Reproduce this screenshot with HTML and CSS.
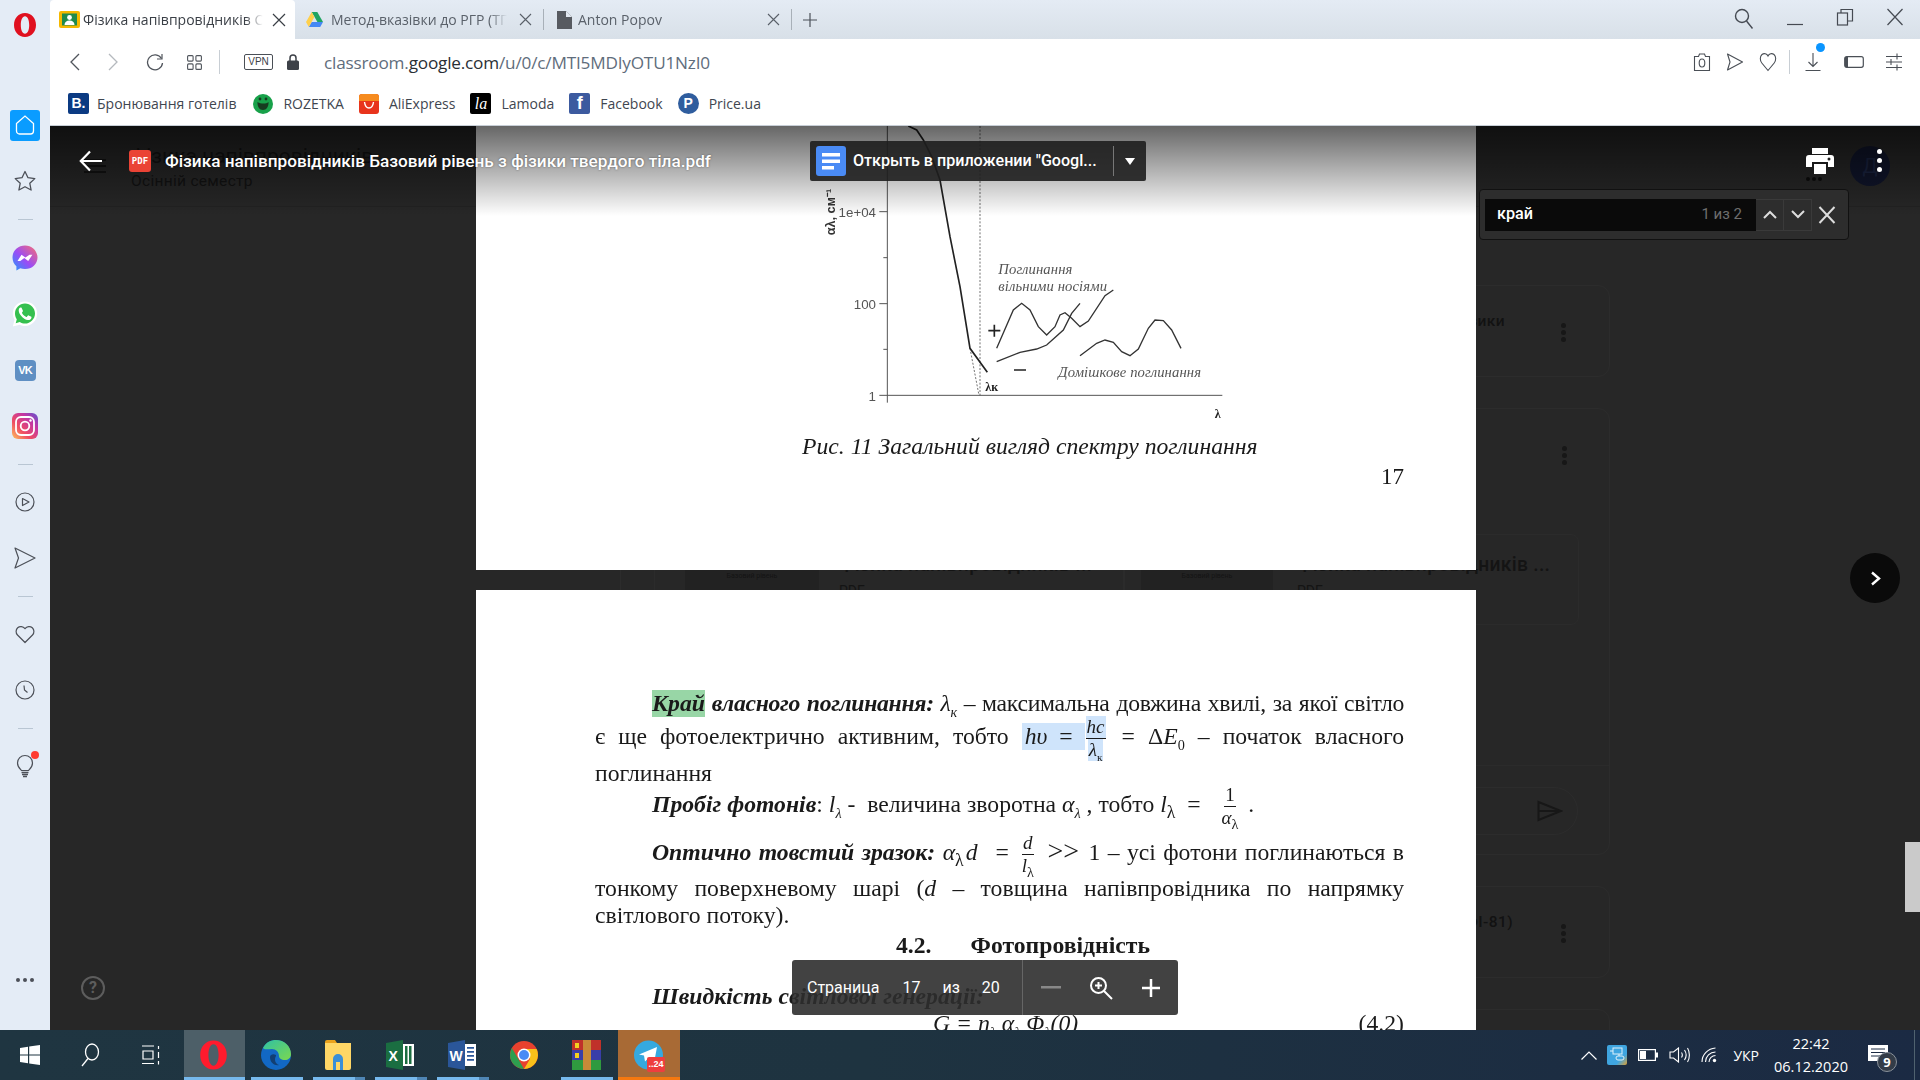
FILE: index.html
```html
<!DOCTYPE html>
<html lang="uk">
<head>
<meta charset="utf-8">
<title>Фізика напівпровідників</title>
<link rel="stylesheet" href="styles.css">
</head>
<body>
<div class="window">
  <aside class="sidebar">
    <div class="logo-item"><svg width="24" height="24" viewBox="0 0 24 24"><path fill="#e0101f" fill-rule="evenodd" d="M12 0C5.500 0 1 5.200 1 12s4.500 12 11 12 11-5.200 11-12S18.500 0 12 0zm0 3.200c2.600 0 4.200 3.900 4.200 8.800s-1.600 8.800-4.200 8.800S7.800 16.900 7.800 12 9.400 3.200 12 3.200z"/></svg></div>
    <div class="side-item"><span class="home-btn"><svg width="22" height="22" viewBox="0 0 22 22" fill="none" stroke="#fff" stroke-width="1.300"><path d="M2.500 9.500 11 2l8.500 7.500V17a3 3 0 0 1-3 3h-11a3 3 0 0 1-3-3z"/></svg></span></div>
    <div class="side-item"><svg width="22" height="22" viewBox="0 0 22 22" fill="none" stroke="#4c5058" stroke-width="1.300" stroke-linejoin="round"><path d="M11 1.500l3 6.200 6.800.9-5 4.700 1.300 6.700-6.100-3.300-6.100 3.300 1.300-6.700-5-4.700 6.800-.9z"/></svg></div>
    <div class="side-sep"></div>
    <div class="side-item side-tall"><svg width="26" height="26" viewBox="0 0 26 26"><defs><linearGradient id="msg" x1="0" y1="1" x2="1" y2="0"><stop offset="0" stop-color="#1e9bfb"/><stop offset=".45" stop-color="#9a4cf6"/><stop offset="1" stop-color="#fb6f6f"/></linearGradient></defs><path fill="url(#msg)" d="M13 .500C6 .500.500 5.600.500 12.500c0 3.600 1.500 6.700 3.900 8.800v4.200l3.900-2.200c1.400.5 3 .8 4.700.8 7 0 12.500-5.100 12.500-11.600S20 .500 13 .500z"/><path fill="#fff" d="M5.500 16l4-6.300 3.900 2.900 4.100-2.900 2.900 0-4.200 6.300-3.900-2.900-4 2.900z"/></svg></div>
    <div class="side-item"><svg width="26" height="26" viewBox="0 0 26 26"><path fill="#fff" d="M13 .500C6 .500.800 5.900.800 12.500c0 2.300.600 4.400 1.800 6.300L.800 25.500l6.900-1.800c1.600.9 3.400 1.300 5.300 1.300 6.900 0 12.200-5.600 12.200-12.500S19.900.500 13 .500z"/><path fill="#35c04f" d="M13 2.500c-5.600 0-10 4.500-10 10 0 2.100.6 4 1.800 5.700l-1.100 4 4.100-1.100c1.600 1 3.300 1.500 5.200 1.500 5.500 0 10-4.600 10-10.100s-4.500-10-10-10z"/><path fill="#fff" d="M9.800 7.300c-.4-.8-.7-.8-1.100-.8-1 .1-2 1.100-2 2.900 0 2.200 1.600 4.300 1.800 4.600 2.500 3.600 5.200 4.700 7.400 5.100 1.600.2 3.300-.9 3.500-2.100.1-.6.100-1 0-1.200l-2.800-1.400c-.3-.1-.5-.1-.7.2l-1 1.200c-.2.200-.4.200-.7.100-1.400-.6-3.100-1.800-4.200-3.900-.1-.3 0-.4.100-.6l.8-1.100c.1-.2.100-.4 0-.6z"/></svg></div>
    <div class="side-item"><span class="vk">VK</span></div>
    <div class="side-item"><svg width="26" height="26" viewBox="0 0 26 26"><defs><linearGradient id="ig" x1="0" y1="1" x2="1" y2="0"><stop offset="0" stop-color="#fdc25c"/><stop offset=".35" stop-color="#ef4d62"/><stop offset=".7" stop-color="#c236a4"/><stop offset="1" stop-color="#5a55d0"/></linearGradient></defs><rect width="26" height="26" rx="6" fill="url(#ig)"/><rect x="4" y="4" width="18" height="18" rx="5" fill="none" stroke="#fff" stroke-width="1.800"/><circle cx="13" cy="13" r="4.300" fill="none" stroke="#fff" stroke-width="1.800"/><circle cx="18.500" cy="7.500" r="1.200" fill="#fff"/></svg></div>
    <div class="side-sep"></div>
    <div class="side-item"><svg width="20" height="20" viewBox="0 0 20 20" fill="none" stroke="#4c5058" stroke-width="1.200"><circle cx="10" cy="10" r="9"/><path d="M7.500 6.500 14 10l-6.500 3.500z" stroke-linejoin="round"/></svg></div>
    <div class="side-item"><svg width="22" height="22" viewBox="0 0 22 22" fill="none" stroke="#4c5058" stroke-width="1.200" stroke-linejoin="round"><path d="M1 1l20 10-20 10 3.500-10z"/></svg></div>
    <div class="side-sep"></div>
    <div class="side-item"><svg width="20" height="20" viewBox="0 0 20 20" fill="none" stroke="#4c5058" stroke-width="1.200"><path d="M10 18.500 2.500 11C.5 9 .7 5.500 2.700 3.700c2.100-1.800 5.300-1.500 7.300 1 2-2.500 5.200-2.800 7.300-1 2 1.800 2.200 5.300.2 7.300z" stroke-linejoin="round"/></svg></div>
    <div class="side-item"><svg width="20" height="20" viewBox="0 0 20 20" fill="none" stroke="#4c5058" stroke-width="1.200"><circle cx="10" cy="10" r="9"/><path d="M9 5.500 9.500 10l3 2.500"/></svg></div>
    <div class="side-sep"></div>
    <div class="side-item bulb"><svg width="18" height="24" viewBox="0 0 18 24" fill="none" stroke="#4c5058" stroke-width="1.200"><path d="M5.500 16.500C3.500 14.500 1.500 13 1.500 9a7.500 7.500 0 0 1 15 0c0 4-2 5.500-4 7.500z"/><path d="M5.500 18.500h7M6 20.500h6M7 22.500h4" stroke-width="1.400"/></svg><i class="bulb-dot"></i></div>
    <div class="side-item side-more"><i></i><i></i><i></i></div>
  </aside>

  <div class="browser">
    <div class="tabstrip">
      <div class="tab tab-active">
        <svg class="fav" width="21" height="17" viewBox="0 0 21 17"><rect width="21" height="17" rx="2" fill="#f5b800"/><rect x="3" y="2.500" width="15" height="12" fill="#1f8a4c"/><circle cx="10.500" cy="6.500" r="2.400" fill="#fff"/><path d="M5.500 14c0-3 2-4.500 5-4.500s5 1.500 5 4.500z" fill="#fff"/></svg>
        <span class="tab-title tab-title-active">Фізика напівпровідників С</span>
        <svg class="tab-x" width="14" height="14" viewBox="0 0 14 14" stroke="#3a3f46" stroke-width="1.200"><path d="M1 1l12 12M13 1 1 13"/></svg>
      </div>
      <div class="tab tab-sep">
        <svg class="fav" width="17" height="16" viewBox="0 0 17 16"><path fill="#1fa463" d="M5.700 0h5.600l5.700 10h-5.600z"/><path fill="#4688f4" d="M5.600 10H17l-2.800 5H2.800z"/><path fill="#ffd04b" d="M5.700 0 0 10l2.800 5 2.800-5 2.800-5z"/></svg>
        <span class="tab-title">Метод-вказівки до РГР (ТГ</span>
        <svg class="tab-x" width="13" height="13" viewBox="0 0 13 13" stroke="#596069" stroke-width="1.100"><path d="M1 1l11 11M12 1 1 12"/></svg>
      </div>
      <div class="tab tab-sep tab-last">
        <svg class="fav" width="15" height="18" viewBox="0 0 15 18"><path fill="#575a60" d="M0 0h9l6 6v12H0z"/><path fill="#e2e8f0" d="M9 0v6h6z"/></svg>
        <span class="tab-title">Anton Popov</span>
        <svg class="tab-x" width="13" height="13" viewBox="0 0 13 13" stroke="#596069" stroke-width="1.100"><path d="M1 1l11 11M12 1 1 12"/></svg>
      </div>
      <svg class="tab-plus" width="14" height="14" viewBox="0 0 14 14" stroke="#4b5159" stroke-width="1.200"><path d="M7 0v14M0 7h14"/></svg>
      <div class="win-controls">
        <svg width="20" height="22" viewBox="0 0 20 22" fill="none" stroke="#454a52" stroke-width="1.400"><circle cx="8" cy="8" r="6.500"/><path d="M12.500 13l6 7.500"/></svg>
        <svg width="18" height="18" viewBox="0 0 18 18" stroke="#454a52" stroke-width="1.200"><path d="M1 16.500h16"/></svg>
        <svg width="18" height="18" viewBox="0 0 18 18" fill="none" stroke="#454a52" stroke-width="1.200"><rect x="1.500" y="5" width="10" height="12"/><path d="M5 5V1.500h11.500V13H11.500"/></svg>
        <svg width="18" height="18" viewBox="0 0 18 18" stroke="#454a52" stroke-width="1.200"><path d="M1.500 1l15 16M16.500 1l-15 16"/></svg>
      </div>
    </div>

    <div class="toolbar">
      <div class="address-row">
        <svg class="nav-icon" width="12" height="18" viewBox="0 0 12 18" fill="none" stroke="#50555c" stroke-width="1.300"><path d="M10 1 2 9l8 8"/></svg>
        <svg class="nav-icon nav-fwd" width="12" height="18" viewBox="0 0 12 18" fill="none" stroke="#b5b9be" stroke-width="1.300"><path d="M2 1l8 8-8 8"/></svg>
        <svg class="nav-icon nav-reload" width="18" height="18" viewBox="0 0 18 18" fill="none" stroke="#50555c" stroke-width="1.300"><path d="M15.500 5.500A7.500 7.500 0 1 0 16.500 10"/><path d="M16 1v5h-5" stroke-width="1.200"/></svg>
        <svg class="nav-icon nav-grid" width="15" height="15" viewBox="0 0 15 15" fill="none" stroke="#50555c" stroke-width="1.100"><rect x=".600" y=".600" width="5.500" height="5.500" rx="1"/><rect x="8.900" y=".600" width="5.500" height="5.500" rx="1"/><rect x=".600" y="8.900" width="5.500" height="5.500" rx="1"/><rect x="8.900" y="8.900" width="5.500" height="5.500" rx="1"/></svg>
        <i class="v-sep nav-sep"></i>
        <span class="vpn">VPN</span>
        <svg class="lock" width="12" height="16" viewBox="0 0 12 16"><path fill="none" stroke="#3d4148" stroke-width="1.500" d="M3 7V4a3 3 0 0 1 6 0v3"/><rect y="6.500" width="12" height="9.500" rx="1.500" fill="#3d4148"/></svg>
        <div class="url"><span class="url-dim">classroom.</span><span class="url-main">google.com</span><span class="url-dim">/u/0/c/MTI5MDIyOTU1NzI0</span></div>
        <div class="addr-tools">
          <svg width="18" height="20" viewBox="0 0 18 20" fill="none" stroke="#4a4f56" stroke-width="1.100"><path d="M1.500 4.500h4l1-2.500h5l1 2.500h4v14h-15z"/><ellipse cx="9" cy="11" rx="2.800" ry="4"/></svg>
          <svg width="18" height="20" viewBox="0 0 18 20" fill="none" stroke="#4a4f56" stroke-width="1.100"><path d="M1.500 2 16.500 10 1.500 18 4 10z" stroke-linejoin="round"/></svg>
          <svg width="18" height="20" viewBox="0 0 18 20" fill="none" stroke="#4a4f56" stroke-width="1.100"><path d="M9 18.500 2.800 11C.8 8.500.8 4.500 3 2.500c2-1.500 4.800-1 6 1.500 1.200-2.500 4-3 6-1.500 2.200 2 2.200 6 .2 8.500z"/></svg>
          <i class="v-sep"></i>
          <span class="dl"><svg width="16" height="20" viewBox="0 0 16 20" fill="none" stroke="#4a4f56" stroke-width="1.100"><path d="M8 1v13M3.500 10 8 14.500 12.500 10M.5 18.500h15"/></svg><i class="dl-dot"></i></span>
          <svg class="batt" width="20" height="12" viewBox="0 0 20 12"><rect x=".7" y=".7" width="18.600" height="10.600" rx="2" fill="none" stroke="#4a4f56" stroke-width="1.200"/><rect x="1" y="1" width="3" height="10" fill="#4a4f56"/></svg>
          <svg width="18" height="20" viewBox="0 0 18 20" stroke="#4a4f56" stroke-width="1.100"><path d="M1 4.500h16M1 10h16M1 15.500h16M12 1.500v6M6 7v6M12 12.500v6"/></svg>
        </div>
      </div>
      <div class="bookmarks">
        <span class="bm bm-first"><span class="bm-ico bm-b">B.</span>Бронювання готелів</span>
        <span class="bm"><svg class="bm-svg" width="20" height="20" viewBox="0 0 20 20"><circle cx="10" cy="10" r="10" fill="#18a14a"/><path d="M4.500 8C8 10 13 10 15.500 8c.3 4.500-2 8-5.500 8s-5.800-3.500-5.500-8z" fill="#173b20"/><circle cx="7" cy="5" r="1.400" fill="#173b20"/><circle cx="13" cy="5" r="1.400" fill="#173b20"/></svg>ROZETKA</span>
        <span class="bm"><svg class="bm-svg" width="20" height="20" viewBox="0 0 20 20"><rect width="20" height="20" rx="3" fill="#e8341c"/><path d="M0 3a3 3 0 0 1 3-3h14a3 3 0 0 1 3 3v4H0z" fill="#f68b1e"/><path d="M5.500 8c.5 4 2.500 6 4.500 6s4-2 4.500-6" fill="none" stroke="#fff" stroke-width="1.400"/></svg>AliExpress</span>
        <span class="bm"><span class="bm-ico bm-la">la</span>Lamoda</span>
        <span class="bm"><span class="bm-ico bm-f">f</span>Facebook</span>
        <span class="bm"><span class="bm-ico bm-p">P</span>Price.ua</span>
      </div>
    </div>

    <main class="content">
      <!-- dimmed classroom stream behind the viewer -->
      <div class="stream">
        <header class="stream-head">
          <svg class="burger" width="22" height="14" viewBox="0 0 22 14" fill="#121212"><rect width="22" height="2"/><rect y="6" width="22" height="2"/><rect y="12" width="22" height="2"/></svg>
          <div class="course"><div class="course-name">Фізика напівпровідників</div><div class="course-term">Осінній семестр</div></div>
          <div class="head-tools">
            <span class="apps-dots"><i></i><i></i><i></i></span>
            <span class="avatar">Д</span>
          </div>
        </header>
        <div class="feed">
          <section class="card card-short"><span class="card-title">Лекції з фізики</span><span class="kebab"><i></i><i></i><i></i></span></section>
          <section class="card card-post">
            <div class="post-top"><span class="kebab"><i></i><i></i><i></i></span></div>
            <div class="attachments">
              <div class="attach attach-a"><div class="thumb">Фізика твердого тіла<br>Базовий рівень</div><div class="attach-text"><div class="attach-name">Фізика напівпровідників ...</div><div class="attach-type">PDF</div></div></div>
              <div class="attach"><div class="thumb">Фізика твердого тіла<br>Базовий рівень</div><div class="attach-text"><div class="attach-name">Фізика напівпровідників ...</div><div class="attach-type">PDF</div></div></div>
            </div>
            <div class="post-bottom"><div class="comment"><svg width="26" height="22" viewBox="0 0 26 22" fill="none" stroke="#171717" stroke-width="2"><path d="M1.500 2 24 11 1.500 20zM1.500 11H24"/></svg></div></div>
          </section>
          <section class="card card-short"><span class="card-title card-title-b">Практичні заняття (ФІ-81)</span><span class="kebab"><i></i><i></i><i></i></span></section>
          <section class="card card-short"></section>
        </div>
      </div>

      <!-- PDF viewer overlay -->
      <div class="viewer">
        <div class="pages">
          <article class="page page-one">
            <svg class="chart" width="480" height="300" viewBox="0 18 1440 900">
              <g fill="none" stroke="#555" stroke-width="3">
                <path d="M322 18V848M298 826H1327M298 275h24M298 551h24M310 413h12M310 688h12"/>
              </g>
              <path d="M600 18V826" stroke="#555" stroke-width="2.500" stroke-dasharray="6 5" fill="none"/>
              <path d="M570 685 597 826" stroke="#555" stroke-width="2.500" stroke-dasharray="6 5" fill="none"/>
              <path d="M385 18 410 30 430 60 455 110 480 180 510 350 540 500 570 685 622 757" fill="none" stroke="#222" stroke-width="5"/>
              <g fill="none" stroke="#333" stroke-width="4">
                <path d="M650 685 700 570 725 550 750 570 775 620 800 645 825 620 840 585 855 578 875 595 900 620 925 603 975 527 1000 510"/>
                <path d="M650 725 720 697 770 687 800 675 850 630 875 580 900 550"/>
                <path d="M900 707 950 670 975 660 1000 667 1025 695 1050 707 1075 687 1105 625 1125 600 1150 602 1175 630 1203 685"/>
                <path d="M625 632h36M643 614v36M702 750h36" stroke="#222" stroke-width="5"/>
              </g>
              <g class="chart-num" text-anchor="end">
                <text x="288" y="291">1e+04</text>
                <text x="288" y="567">100</text>
                <text x="288" y="842">1</text>
              </g>
              <text class="chart-axis" transform="translate(165 346) rotate(-90)">αλ, см⁻¹</text>
              <g class="chart-note">
                <text x="655" y="462" textLength="222">Поглинання</text>
                <text x="655" y="514" textLength="326">вільними носіями</text>
                <text x="835" y="770" textLength="428">Домішкове поглинання</text>
              </g>
              <text class="chart-lam" x="616" y="812">λк</text>
              <text class="chart-lam" x="1304" y="893">λ</text>
            </svg>
            <p class="caption">Рис. 11 Загальний вигляд спектру поглинання</p>
            <p class="page-num">17</p>
          </article>

          <article class="page page-two">
            <div class="line line-a first-indent just"><mark class="hit"><b><i>Край</i></b></mark> <b><i>власного поглинання:</i></b> <i>λ<sub>к</sub></i> – максимальна довжина хвилі, за якої світло</div>
            <div class="line line-b just">є ще фотоелектрично активним, тобто <mark class="sel"><i>hυ</i> &nbsp;=&nbsp;</mark><span class="frac frac-sel"><span class="sel-n"><i>hc</i></span><span class="sel-d"><i>λ</i><sub>к</sub></span></span> = Δ<i>E</i><sub>0</sub> – початок власного</div>
            <div class="line line-c">поглинання</div>
            <div class="line line-d first-indent"><b><i>Пробіг фотонів</i></b>: <i>l<sub>λ</sub></i> -&nbsp; величина зворотна <i>α<sub>λ</sub></i> , тобто <i>l</i><sub class="big">λ</sub> &nbsp;=&nbsp; <span class="frac frac-wide"><span>1</span><span><i>α</i><sub class="big">λ</sub></span></span> .</div>
            <div class="line line-e first-indent just"><b><i>Оптично товстий зразок:</i></b> <i>α</i><sub class="big">λ</sub><i class="math-d">d</i> &nbsp;=<span class="frac frac-e"><span><i>d</i></span><span><i>l</i><sub class="big">λ</sub></span></span> <span class="gg">&gt;&gt;</span> 1 – усі фотони поглинаються в</div>
            <div class="line line-f just">тонкому поверхневому шарі (<i>d</i> – товщина напівпровідника по напрямку</div>
            <div class="line line-g">світлового потоку).</div>
            <h2 class="section-title"><span>4.2.</span><span>Фотопровідність</span></h2>
            <div class="line line-h first-indent"><b><i>Швидкість світлової генерації:</i></b></div>
            <div class="formula"><i class="formula-body">G = η<sub>λ</sub> α<sub>λ</sub> Φ<sub>λ</sub>(0)</i><span>(4.2)</span></div>
          </article>
        </div>

        <div class="viewer-fade"></div>

        <div class="viewer-head">
          <svg class="back" width="24" height="22" viewBox="0 0 24 22" fill="none" stroke="#fff" stroke-width="2.200"><path d="M23 11H2M11 1.500 1.800 11l9.200 9.500"/></svg>
          <span class="pdf-badge">PDF</span>
          <span class="doc-title">Фізика напівпровідників Базовий рівень з фізики твердого тіла.pdf</span>
          <svg class="print" width="28" height="26" viewBox="0 0 28 26" fill="#fff"><path d="M6 0h16v6H6zM3 7h22a3 3 0 0 1 3 3v9h-6v-5H6v5H0v-9a3 3 0 0 1 3-3z"/><path d="M8 16h12v10H8z"/><circle cx="23" cy="11" r="1.500" fill="#222"/></svg>
          <span class="v-dots"><i></i><i></i><i></i></span>
        </div>

        <div class="open-with">
          <svg width="30" height="30" viewBox="0 0 30 30"><rect width="30" height="30" rx="3" fill="#4a8bf5"/><path fill="#fff" d="M6 7h18v3.500H6zM6 13.500h18V17H6zM6 20h12v3.500H6z"/></svg>
          <span class="open-text">Открыть в приложении "Googl...</span>
          <i class="open-sep"></i>
          <i class="open-caret"></i>
        </div>

        <div class="find">
          <div class="find-input"><span class="find-q">край</span><span class="find-count">1 из 2</span></div>
          <span class="find-btn"><svg width="14" height="9" viewBox="0 0 14 9" fill="none" stroke="#ddd" stroke-width="2"><path d="M1 8l6-6 6 6"/></svg></span>
          <span class="find-btn"><svg width="14" height="9" viewBox="0 0 14 9" fill="none" stroke="#ddd" stroke-width="2"><path d="M1 1l6 6 6-6"/></svg></span>
          <svg class="find-x" width="18" height="18" viewBox="0 0 18 18" stroke="#ddd" stroke-width="2"><path d="M1.500 1 16.500 17M16.500 1 1.500 17"/></svg>
        </div>

        <div class="next"><svg width="11" height="15" viewBox="0 0 11 15" fill="none" stroke="#fff" stroke-width="2.400"><path d="M2 1.500 9 7.500l-7 6"/></svg></div>
        <div class="thumb-scroll"></div>
        <div class="help">?</div>

        <div class="pager">
          <div class="pager-info"><span>Страница</span><span class="pg-17">17</span><span class="pg-iz">из</span><span class="pg-20">20</span></div>
          <div class="pager-zoom">
            <svg width="20" height="3" viewBox="0 0 20 3" fill="#888"><rect width="20" height="2.500"/></svg>
            <svg width="24" height="24" viewBox="0 0 24 24" fill="none" stroke="#fff" stroke-width="2"><circle cx="9.500" cy="9.500" r="7.500"/><path d="M15 15l8 8M9.500 6v7M6 9.500h7" /></svg>
            <svg width="20" height="20" viewBox="0 0 20 20" stroke="#fff" stroke-width="2.500"><path d="M10 1v18M1 10h18"/></svg>
          </div>
        </div>
      </div>
    </main>
  </div>
</div>

<footer class="taskbar">
  <div class="tb-sys"><svg width="20" height="20" viewBox="0 0 20 20" fill="#fff"><path d="M0 3l8-1.200V9.500H0zM9.200 1.600 20 0v9.500H9.200zM0 10.500h8v7.700L0 17zM9.200 10.500H20V20L9.200 18.400z"/></svg></div>
  <div class="tb-sys"><svg width="20" height="24" viewBox="0 0 20 24" fill="none" stroke="#fff" stroke-width="1.300"><ellipse cx="12" cy="9" rx="6.500" ry="8"/><path d="M8 15.500 2 23"/></svg></div>
  <div class="tb-sys tb-view"><svg width="20" height="20" viewBox="0 0 20 20" fill="none" stroke="#fff" stroke-width="1.200"><path d="M1 1h12M1 18.500h12M2 6h10v8H2zM17.500 1v3M17.500 7v6M17.500 16v3.500"/></svg></div>
  <div class="tb-app tb-active"><svg width="29" height="30" viewBox="0 0 24 24"><path fill="#ff1b2d" fill-rule="evenodd" d="M12 0C5.500 0 1 5.200 1 12s4.500 12 11 12 11-5.200 11-12S18.500 0 12 0zm0 3.200c2.600 0 4.200 3.900 4.200 8.800s-1.600 8.800-4.200 8.800S7.800 16.900 7.800 12 9.400 3.200 12 3.200z"/></svg></div>
  <div class="tb-app tb-on"><svg width="30" height="30" viewBox="0 0 30 30"><defs><linearGradient id="edge" x1="0" y1="0" x2="1" y2="1"><stop offset="0" stop-color="#2fc1a4"/><stop offset="1" stop-color="#7bd84f"/></linearGradient></defs><circle cx="15" cy="15" r="15" fill="#1268c4"/><path fill="url(#edge)" d="M2 8C5 2 10 0 15 0c8 0 15 6 15 14 0 4-3 6-6 6-4 0-6-2-6-4 0-4-3-7-7-7-4 0-8 1-9-1z"/><path fill="#123f73" d="M9 17c0 6 5 9 9 8-4-1-5-6-3-9 1-2-6-3-6 1z"/></svg></div>
  <div class="tb-app tb-on tb-split"><svg width="26" height="30" viewBox="0 0 26 30"><path fill="#eaa21c" d="M0 2a2 2 0 0 1 2-2h8l2 3h-12z"/><path fill="#ffd766" d="M0 3h26v25a2 2 0 0 1-2 2H2a2 2 0 0 1-2-2z"/><path fill="#3a8fd8" d="M8 19a5 5 0 0 1 10 0v11h-3v-8h-4v8H8z"/></svg></div>
  <div class="tb-app tb-on tb-split"><svg width="28" height="30" viewBox="0 0 28 30"><path fill="#1a6e41" d="M0 3 17 0v30L0 27z"/><path fill="#fff" d="M17 4h11v22H17z"/><path fill="#1a6e41" d="M19 6h2.500v18H19zM23 6h2.500v18H23z"/><text class="tb-letter" x="2.500" y="21">X</text></svg></div>
  <div class="tb-app tb-on tb-split"><svg width="28" height="30" viewBox="0 0 28 30"><path fill="#2a5699" d="M0 3 17 0v30L0 27z"/><path fill="#fff" d="M17 4h11v22H17z"/><path fill="#2a5699" d="M19 7h7v1.800h-7zM19 11h7v1.800h-7zM19 15h7v1.800h-7zM19 19h7v1.800h-7z"/><text class="tb-letter" x="1.500" y="21">W</text></svg></div>
  <div class="tb-app"><svg width="28" height="28" viewBox="0 0 28 28"><circle cx="14" cy="14" r="14" fill="#e8412e"/><path fill="#f9c11a" d="M14 8h12.600A14 14 0 0 1 14 28l6-10z"/><path fill="#2e9e4f" d="M1.900 7 8 17.500 14 28A14 14 0 0 1 1.900 7z"/><circle cx="14" cy="14" r="6.500" fill="#fff"/><circle cx="14" cy="14" r="5" fill="#4a8bf5"/></svg></div>
  <div class="tb-app tb-on"><svg width="29" height="30" viewBox="0 0 29 30"><rect width="29" height="10" fill="#c0312a"/><rect y="10" width="29" height="10" fill="#3a3ea8"/><rect y="20" width="29" height="10" fill="#2f9a3f"/><rect x="11" width="8" height="30" fill="#c98a38"/><rect x="3" y="3" width="4" height="5" fill="#f5d020"/><rect x="3" y="13" width="4" height="5" fill="#f5d020"/></svg></div>
  <div class="tb-app tb-tg"><svg width="29" height="30" viewBox="0 0 29 30"><circle cx="14.500" cy="15" r="14.500" fill="#35a9e0"/><path fill="#fff" d="M5 14.500 23 7l-3 16-6-4.500-3 3-1-6z"/></svg><span class="tg-badge">..24</span></div>
  <div class="tray">
    <svg width="16" height="9" viewBox="0 0 16 9" fill="none" stroke="#fff" stroke-width="1.200"><path d="M.5 8.500 8 1l7.500 7.500"/></svg>
    <span class="intel"><svg width="20" height="20" viewBox="0 0 20 20" fill="none" stroke="#dff1fb" stroke-width="1"><rect x="6" y="3" width="9" height="6"/><rect x="9" y="11" width="8" height="4" rx="2"/><path d="M3 6h3M12 9v2"/></svg></span>
    <svg width="20" height="12" viewBox="0 0 20 12"><rect x=".6" y=".6" width="16.800" height="10.800" fill="none" stroke="#fff" stroke-width="1.200"/><rect x="2" y="2" width="6" height="8" fill="#fff"/><rect x="18" y="3.500" width="2" height="5" fill="#fff"/></svg>
    <svg width="21" height="16" viewBox="0 0 21 16" fill="none" stroke="#fff" stroke-width="1.100"><path d="M1 5h3.500L9.500 1v14L4.500 11H1zM12.500 5.500c1 1.500 1 3.500 0 5M15.500 3c2 3 2 7 0 10M18.500 1c2.500 4 2.500 10 0 14"/></svg>
    <svg width="18" height="16" viewBox="0 0 18 16" fill="none" stroke="#fff" stroke-width="1.100"><path d="M1 15C1 7.500 7 1.500 14.500 1M4.500 15c0-5.500 4.500-10 10-10M8 15c0-3.500 3-6.500 6.500-6.500"/><circle cx="13.500" cy="13.500" r="1.700" fill="#fff" stroke="none"/></svg>
    <span class="tray-lang">УКР</span>
    <div class="clock"><span>22:42</span><span>06.12.2020</span></div>
    <div class="notif"><svg width="20" height="17" viewBox="0 0 20 17"><path fill="#fff" d="M0 0h20v16H0z"/><path stroke="#1b2a43" d="M3 4h14M3 7.500h14M3 11h14"/></svg><span class="notif-badge">9</span></div>
    <i class="tray-edge"></i>
  </div>
</footer>
</body>
</html>
```

FILE: styles.css
```css
* { box-sizing: border-box; }
html, body { margin: 0; padding: 0; width: 1920px; height: 1080px; overflow: hidden; }
body { font-family: "Open Sans", "Noto Sans", sans-serif; display: flex; flex-direction: column; background: #1d3042; }

.window { display: flex; height: 1030px; }

/* ---- Opera sidebar ---- */
.sidebar { width: 50px; flex: none; display: flex; flex-direction: column; align-items: center; background: #e4ecf6; }
.logo-item { height: 97px; padding-top: 13px; display: flex; justify-content: center; align-items: flex-start; }
.side-item { height: 56px; width: 50px; display: flex; align-items: center; justify-content: center; position: relative; }
.side-tall { height: 57px; }
.side-sep { height: 20px; width: 15px; display: flex; align-items: center; }
.side-sep::before { content: ""; display: block; width: 15px; height: 1px; background: #b9c6d3; }
.home-btn { width: 30px; height: 31px; background: #0a9cff; border-radius: 3px; display: flex; align-items: center; justify-content: center; }
.vk { width: 21px; height: 21px; border-radius: 4px; background: #5f8fc3; color: #fff; font: 700 11px/21px "Liberation Sans", sans-serif; text-align: center; letter-spacing: -1px; }
.bulb-dot { position: absolute; left: 31px; top: 13px; width: 8px; height: 8px; border-radius: 50%; background: #ff3b30; }
.side-more { margin-top: auto; margin-bottom: 22px; gap: 3px; }
.side-more i { width: 4px; height: 4px; border-radius: 50%; background: #4c5058; }

/* ---- browser chrome ---- */
.browser { flex: 1; display: flex; flex-direction: column; min-width: 0; }
.tabstrip { height: 39px; flex: none; display: flex; align-items: stretch; background: linear-gradient(#e4ebf4, #d8e0e8); }
.tab { width: 249px; display: flex; align-items: center; color: #5a616a; font-size: 14px; position: relative; padding-left: 11px; }
.tab-active { width: 245px; background: #fff; color: #3a3f46; border-radius: 4px 4px 0 0; padding-left: 9px; }
.tab-sep::after { content: ""; position: absolute; right: 0; top: 9px; bottom: 9px; width: 1px; background: #a8b0b8; }
.tab-last { width: 248px; padding-left: 13px; }
.fav { flex: none; }
.tab-title { width: 180px; margin-left: 3px; white-space: nowrap; overflow: hidden; -webkit-mask-image: linear-gradient(90deg, #000 90%, transparent); mask-image: linear-gradient(90deg, #000 90%, transparent); }
.tab-sep .tab-title { margin-left: 8px; width: 176px; }
.tab-last .tab-title { margin-left: 6px; width: 188px; }
.tab-x { position: absolute; right: 9px; top: 13px; }
.tab-sep .tab-x { right: 12px; }
.tab-plus { margin: 13px 0 0 11px; }
.win-controls { margin-left: auto; display: flex; align-items: flex-start; gap: 32px; padding: 8px 16px 0 0; }

.toolbar { height: 87px; flex: none; background: #fff; border-bottom: 1px solid #c7ced6; display: flex; flex-direction: column; }
.address-row { height: 46px; display: flex; align-items: center; padding-left: 19px; }
.nav-icon { flex: none; }
.nav-fwd { margin-left: 26px; }
.nav-reload { margin-left: 27px; }
.nav-grid { margin-left: 23px; }
.v-sep { width: 1px; height: 24px; background: #c8ced4; flex: none; }
.nav-sep { margin-left: 17px; }
.vpn { margin-left: 24px; width: 29px; height: 16px; border: 1px solid #4a4f56; border-radius: 2px; font: 10px/14px "Liberation Sans", sans-serif; text-align: center; color: #3d4148; }
.lock { margin-left: 14px; flex: none; }
.url { margin-left: 25px; font-size: 17.200px; white-space: nowrap; letter-spacing: -.2px; }
.url-dim { color: #5f6d7c; }
.url-main { color: #2a2f35; }
.addr-tools { margin-left: auto; display: flex; align-items: center; gap: 15px; padding-right: 17px; }
.addr-tools .v-sep { margin: 0 0 0 -3px; }
.dl { position: relative; display: flex; margin-right: 8px; }
.batt { margin-right: 6px; }
.dl-dot { position: absolute; left: 11px; top: -9px; width: 9px; height: 9px; border-radius: 50%; background: #0a95ff; }
.bookmarks { height: 37px; display: flex; align-items: center; padding-left: 18px; gap: 15px; font-size: 14px; color: #3f4650; }
.bm { display: flex; align-items: center; white-space: nowrap; }
.bm-ico, .bm-svg { margin-right: 10px; flex: none; }
.bm-first { margin-right: 2px; }
.bm-first .bm-ico { margin-right: 8px; }
.bm-ico { width: 21px; height: 21px; display: block; text-align: center; color: #fff; border-radius: 2px; font: 700 14px/21px "Liberation Sans", sans-serif; }
.bm-b { background: #0b3a82; }
.bm-la { background: #000; font: italic 16px/21px "Liberation Serif", serif; }
.bm-f { background: #3c5a9f; font-size: 18px; }
.bm-p { background: #2f5d9e; border-radius: 50%; }

/* ---- content ---- */
.content { flex: 1; position: relative; overflow: hidden; background: #272727; }

/* dimmed stream */
.stream { height: 100%; display: flex; flex-direction: column; }
.stream-head { height: 81px; flex: none; border-bottom: 1px solid #222; display: flex; align-items: center; padding-left: 34px; font-family: Roboto, sans-serif; color: #121212; }
.burger { margin-top: 0; }
.course { margin: 6px 0 0 24px; }
.course-name { font-size: 21px; line-height: 25px; }
.course-term { font-size: 15.500px; line-height: 25px; margin-left: 1px; letter-spacing: .3px; }
.head-tools { margin-left: auto; display: flex; align-items: center; padding-right: 30px; gap: 28px; }
.apps-dots { display: flex; gap: 2px; margin-top: 26px; }
.apps-dots i { width: 4px; height: 4px; border-radius: 50%; background: #0c0c0c; }
.avatar { width: 40px; height: 40px; border-radius: 50%; background: #10152b; color: #1b2442; text-align: center; font: 20px/40px Roboto, sans-serif; }
.feed { flex: 1; display: flex; flex-direction: column; align-items: flex-end; gap: 31px; padding: 78px 310px 0 0; }
.card { width: 990px; flex: none; border: 1px solid #2c2c2c; border-radius: 12px; }
.card-short { height: 92px; display: flex; align-items: flex-start; justify-content: flex-end; padding: 25px 42px 0 0; }
.card-title { font: 500 15.500px/20px Roboto, sans-serif; color: #121212; margin-right: 54px; letter-spacing: .4px; white-space: nowrap; }
.card-title-b { margin-right: 46px; }
.kebab { display: flex; flex-direction: column; gap: 2px; margin: 12px 0 0 0; width: 8px; align-items: center; flex: none; }
.kebab i { width: 5px; height: 5px; border-radius: 50%; background: #171717; }
.card-post { height: 447px; display: flex; flex-direction: column; }
.post-top { height: 125px; display: flex; justify-content: flex-end; padding: 25px 41px 0 0; flex: none; }
.attachments { height: 91px; display: flex; justify-content: flex-end; gap: 0; padding-right: 30px; flex: none; }
.attach { width: 455px; height: 91px; border: 1px solid #2b2b2b; border-radius: 8px; display: flex; }
.attach-a { width: 470px; padding-left: 16px; }
.thumb { width: 132px; margin-left: 16px; text-align: center; background: #222; color: #141414; font: 7px/12px Roboto, sans-serif; padding-top: 23px; flex: none; }
.attach-a .thumb { margin-left: 14px; width: 134px; }
.attach-text { margin-left: 24px; padding-top: 20px; font-family: Roboto, sans-serif; color: #141414; }
.attach-a .attach-text { margin-left: 20px; }
.attach-name { font: 500 19.300px/20px Roboto, sans-serif; white-space: nowrap; letter-spacing: .3px; }
.attach-type { font-size: 14px; margin-top: 8px; }
.post-bottom { margin-top: 140px; flex: 1; border-top: 1px solid #2b2b2b; padding: 21px 31px 0 0; display: flex; justify-content: flex-end; }
.comment { width: 500px; height: 48px; border: 1px solid #2c2c2c; border-radius: 24px; display: flex; align-items: center; justify-content: flex-end; padding-right: 14px; }

/* viewer overlay */
.viewer { position: absolute; inset: 0; }
.pages { display: flex; flex-direction: column; gap: 20px; padding-left: 426px; }
.page { width: 1000px; background: #fff; color: #1a1a1a; font-family: "Liberation Serif", serif; flex: none; }
.page-one { height: 444px; }
.chart { display: block; margin-left: 304px; filter: blur(.5px); }
.chart-num { font: 40px "Liberation Sans", sans-serif; fill: #555; }
.chart-axis { font: 700 38px "Liberation Sans", sans-serif; fill: #333; }
.chart-note { font: italic 44px "Liberation Serif", serif; fill: #555; }
.chart-lam { font: 700 36px "Liberation Serif", serif; fill: #222; }
.caption { margin: 7px 0 0 326px; font-style: italic; font-size: 23.700px; line-height: 26px; white-space: nowrap; filter: blur(.3px); }
.page-num { margin: 5px 72px 0 0; text-align: right; font-size: 23px; line-height: 26px; filter: blur(.3px); }
.page-two { height: 600px; padding: 100px 72px 0 119px; font-size: 23.700px; filter: blur(.3px); }
.line { white-space: nowrap; }
.just { white-space: normal; text-align: justify; text-align-last: justify; }
.first-indent { padding-left: 57px; }
.line sub { font-size: .6em; line-height: 0; }
.line sub.big { font-size: .75em; }
.line-a { height: 24px; line-height: 24px; letter-spacing: -.3px; word-spacing: -3px; white-space: nowrap; }
.line-b { height: 44px; line-height: 44px; }
.line-c { height: 30px; line-height: 30px; }
.line-d { height: 32px; line-height: 32px; margin-bottom: 5px; }
.line-e { height: 51px; line-height: 51px; }
.line-f { height: 25px; line-height: 25px; }
.line-g { height: 28px; line-height: 28px; }
.line-h { height: 30px; line-height: 30px; margin-top: 20px; }
mark { color: inherit; }
.hit { background: #98d6a6; display: inline-block; line-height: 27px; letter-spacing: 0; }
.sel { background: #cfe4fb; display: inline-block; line-height: 27px; padding: 0 6px 0 3px; }
.frac { display: inline-flex; flex-direction: column; align-items: center; vertical-align: middle; line-height: 22px; font-size: 19px; margin: -14px 3px -14px 8px; }
.frac-sel { margin-left: 1px; }
.frac-e { margin-left: 12px; }
.frac span { display: block; padding: 0 1px; }
.frac > span:first-child { border-bottom: 1.500px solid #1a1a1a; }
.sel-n, .sel-d { background: #cfe4fb; }
.math-d { margin-left: 2px; margin-right: 3px; }
.gg { font-size: 28px; margin: 0 2px; }
.section-title { margin: 0; height: 32px; line-height: 32px; font-size: 23.700px; font-weight: 700; display: flex; gap: 39px; padding-left: 301px; }
.formula { display: flex; justify-content: space-between; height: 26px; line-height: 26px; padding-left: 338px; margin-top: -1px; }
.formula-body { font-style: italic; }
.formula-body sub { font-size: .6em; line-height: 0; }

.viewer-fade { position: absolute; left: 0; right: 0; top: 0; height: 90px; background: linear-gradient(rgba(0,0,0,.6), rgba(0,0,0,0)); }
.viewer-head { position: absolute; left: 0; right: 0; top: 0; height: 70px; display: flex; align-items: center; padding-left: 29px; }
.back { flex: none; }
.pdf-badge { margin-left: 26px; width: 22px; height: 22px; border-radius: 3px; background: #ea4335; color: #fff; font: 700 9px/22px "DejaVu Sans Mono", monospace; text-align: center; flex: none; }
.doc-title { margin-left: 14px; color: #fff; font: 500 17.200px/22px Roboto, sans-serif; white-space: nowrap; text-shadow: 0 0 2px rgba(0,0,0,.5); }
.print { margin-left: auto; flex: none; margin-right: 43px; }
.v-dots { display: flex; flex-direction: column; gap: 4px; padding-right: 38px; margin-top: -2px; }
.v-dots i { width: 5px; height: 5px; border-radius: 50%; background: #fff; }

.open-with { position: absolute; left: 760px; top: 15px; width: 336px; height: 40px; background: rgba(30,30,30,.9); border-radius: 2px; display: flex; align-items: center; padding-left: 6px; color: #fff; }
.open-text { margin-left: 7px; width: 252px; font: 500 16.100px/20px Roboto, sans-serif; white-space: nowrap; }
.open-sep { width: 1px; height: 30px; background: #777; margin-left: 8px; flex: none; }
.open-caret { margin-left: 11px; width: 0; height: 0; border: 5.500px solid transparent; border-top: 7px solid #fff; border-bottom: 0; flex: none; }

.find { position: absolute; left: 1429px; top: 63px; width: 370px; height: 51px; background: #2d2d2d; border: 1px solid #111; border-radius: 4px; display: flex; align-items: center; padding-left: 5px; color: #fff; }
.find-input { width: 271px; height: 32px; background: #0a0a0a; display: flex; align-items: center; justify-content: space-between; padding: 0 14px 2px 12px; font: 500 16.200px Roboto, sans-serif; }
.find-count { color: #6e6e6e; font-size: 15px; font-weight: 400; }
.find-btn { width: 28px; height: 32px; border: 1px solid #3a3a3a; border-left: 0; display: flex; align-items: center; justify-content: center; }
.find-x { margin-left: 6px; }

.next { position: absolute; left: 1800px; top: 427px; width: 50px; height: 50px; border-radius: 50%; background: #0a0a0a; display: flex; align-items: center; justify-content: center; }
.thumb-scroll { position: absolute; left: 1855px; top: 716px; width: 15px; height: 70px; background: #cacaca; }
.help { position: absolute; left: 31px; top: 850px; width: 24px; height: 24px; border: 2px solid #5d5d5d; border-radius: 50%; color: #5d5d5d; font: 700 16px/20px Roboto, sans-serif; text-align: center; }
.pager { position: absolute; left: 742px; top: 834px; width: 386px; height: 55px; background: rgba(45,45,45,.9); border-radius: 3px; display: flex; color: #fff; }
.pager-info { width: 231px; border-right: 1px solid #666; display: flex; align-items: center; padding-left: 15px; font: 16px Roboto, sans-serif; }
.pg-17 { margin-left: 23px; }
.pg-iz { margin-left: 22px; }
.pg-20 { margin-left: 22px; }
.pager-zoom { flex: 1; display: flex; align-items: center; padding-left: 18px; gap: 28px; }

/* ---- taskbar ---- */
.taskbar { height: 50px; flex: none; display: flex; background: linear-gradient(90deg, #1f3541, #1e3340 45%, #1b2a43); color: #fff; }
.tb-sys { width: 60px; display: flex; align-items: center; justify-content: center; }
.tb-view { width: 64px; padding-right: 2px; }
.tb-app { width: 62px; display: flex; align-items: center; justify-content: center; position: relative; padding-right: 2px; }
.tb-active { background: #4d5f68; width: 62px; border-right: 1px solid #1e3340; }
.tb-on::after, .tb-active::after { content: ""; position: absolute; left: 5px; right: 5px; bottom: 0; height: 3px; background: #76b9ed; }
.tb-active::after { left: 0; right: 0; }
.tb-split::before { content: ""; position: absolute; right: 5px; width: 10px; bottom: 0; height: 3px; background: #4f86b5; z-index: 1; }
.tb-letter { font: 700 14px "Liberation Sans", sans-serif; fill: #fff; }
.tb-tg { background: #a86a35; }
.tb-tg::after { content: ""; position: absolute; left: 0; right: 0; bottom: 0; height: 3px; background: #f5780f; }
.tg-badge { position: absolute; left: 29px; top: 27px; width: 18px; height: 15px; background: #ee3e3e; border-radius: 2px; font: 700 9px/15px "Liberation Sans", sans-serif; text-align: center; }
.tray { margin-left: auto; display: flex; align-items: center; position: relative; padding-right: 32px; gap: 0; }
.tray > svg:nth-child(1) { margin-right: 10px; }
.intel { width: 20px; height: 20px; border-radius: 2px; background: linear-gradient(135deg, #3fa5e0 70%, #e0a030); margin-right: 11px; display: block; }
.intel svg { display: block; }
.tray > svg:nth-child(3) { margin-right: 11px; }
.tray > svg:nth-child(4) { margin-right: 11px; }
.tray > svg:nth-child(5) { margin-right: 14px; }
.tray-lang { font-size: 14px; margin-right: 17px; }
.clock { width: 70px; display: flex; flex-direction: column; align-items: center; font-size: 14.500px; line-height: 23px; margin-right: 22px; white-space: nowrap; }
.notif { position: relative; width: 20px; height: 17px; display: flex; margin-top: -4px; }
.notif-badge { position: absolute; left: 9px; top: 7px; width: 20px; height: 20px; border-radius: 50%; background: #333c48; border: 1px solid #8a929b; font: 700 13px/18px "Open Sans", sans-serif; text-align: center; }
.tray-edge { position: absolute; right: 5px; top: 0; bottom: 0; width: 1px; background: #50626f; }
```
